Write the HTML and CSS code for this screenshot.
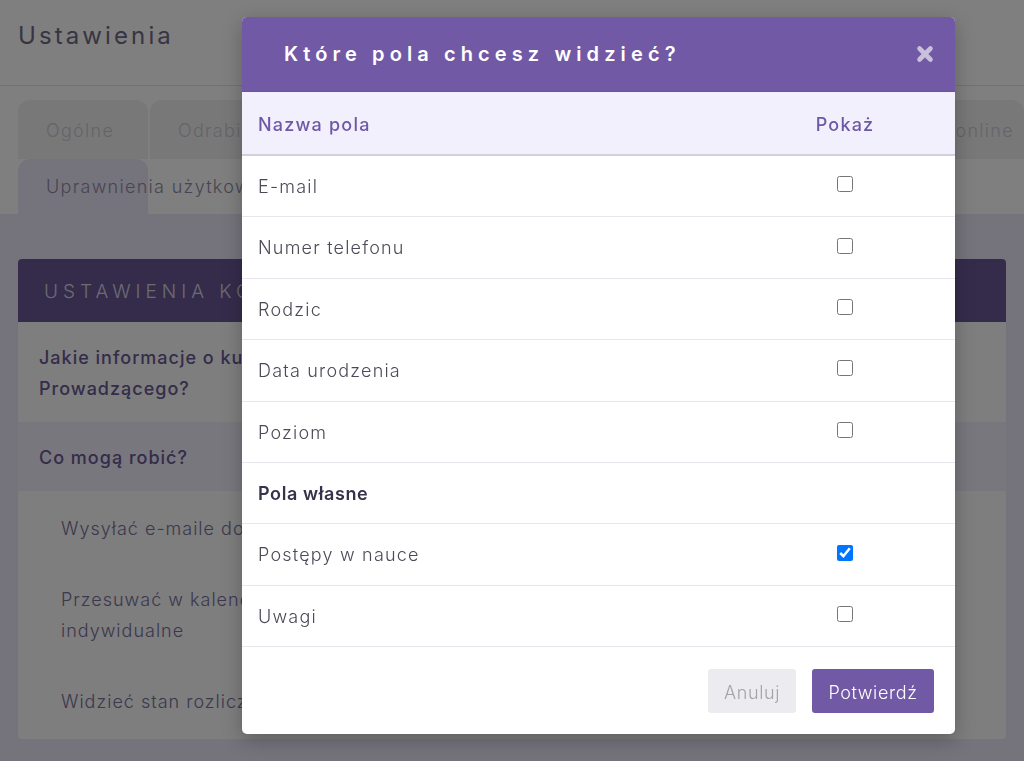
FILE: index.html
```html
<!DOCTYPE html>
<html lang="pl">
<head>
    <meta charset="UTF-8">
    <meta name="viewport" content="width=device-width, initial-scale=1.0">
    <title>Ustawienia</title>
    <link rel="stylesheet" href="styles.css">
</head>
<body>
<div class="page">
    <header class="top">
        <h1>Ustawienia</h1>
    </header>
    <nav class="tabs">
        <div class="tab-row">
            <a class="tab">Ogólne</a>
            <a class="tab">Odrabianie zajęć</a>
            <a class="tab tab-push">Zajęcia online</a>
        </div>
        <div class="tab-row">
            <a class="tab active">Uprawnienia użytkowników</a>
        </div>
    </nav>
    <main class="content">
        <section class="card">
            <h2 class="card-title">Ustawienia konta prowadzącego</h2>
            <div class="card-row question">Jakie informacje o kursantach może widzieć konto<br>Prowadzącego?</div>
            <div class="card-row question alt">Co mogą robić?</div>
            <div class="card-row option">Wysyłać e-maile do kursantów</div>
            <div class="card-row option">Przesuwać w kalendarzu zajęcia grupowe i<br>indywidualne</div>
            <div class="card-row option">Widzieć stan rozliczeń kursantów</div>
        </section>
    </main>
</div>

<div class="overlay"></div>

<div class="modal">
    <div class="modal-header">
        <h3>Które pola chcesz widzieć?</h3>
        <button class="close" type="button" aria-label="Zamknij">
            <svg width="18" height="18" viewBox="0 0 18 18">
                <path d="M3.5 3.5 L14.5 14.5 M14.5 3.5 L3.5 14.5" stroke="#c9c1dc" stroke-width="4.6" stroke-linecap="round"/>
            </svg>
        </button>
    </div>
    <table class="fields">
        <thead>
        <tr>
            <th>Nazwa pola</th>
            <th class="col-show">Pokaż</th>
        </tr>
        </thead>
        <tbody>
        <tr><td>E-mail</td><td class="col-show"><input type="checkbox"></td></tr>
        <tr><td>Numer telefonu</td><td class="col-show"><input type="checkbox"></td></tr>
        <tr><td>Rodzic</td><td class="col-show"><input type="checkbox"></td></tr>
        <tr><td>Data urodzenia</td><td class="col-show"><input type="checkbox"></td></tr>
        <tr><td>Poziom</td><td class="col-show"><input type="checkbox"></td></tr>
        <tr class="group"><td colspan="2">Pola własne</td></tr>
        <tr><td>Postępy w nauce</td><td class="col-show"><input type="checkbox" checked></td></tr>
        <tr><td>Uwagi</td><td class="col-show"><input type="checkbox"></td></tr>
        </tbody>
    </table>
    <div class="modal-footer">
        <button class="btn btn-light" type="button">Anuluj</button>
        <button class="btn btn-primary" type="button">Potwierdź</button>
    </div>
</div>
</body>
</html>
```

FILE: styles.css
```css
*, *:before, *:after {
    box-sizing: border-box;
}

body {
    font-family: Inter, 'Open Sans', Arial, sans-serif;
    margin: 0;
    padding: 0;
    background-color: #ffffff;
    color: #40356a;
    height: 761px;
    overflow: hidden;
}

.page {
    min-height: 761px;
    background-color: #eae8f8;
}

/* page header */
.top {
    background-color: #ffffff;
    height: 86px;
    padding: 21px 18px 0;
    border-bottom: 1px solid #e4e4ea;
}

.top h1 {
    margin: 0;
    font-size: 24px;
    font-weight: 400;
    letter-spacing: 3.1px;
    color: #6e6a86;
}

/* tabs */
.tabs {
    background-color: #ffffff;
    padding: 14px 0 0 18px;
}

.tab-row {
    display: flex;
    gap: 2px;
}

.tab {
    display: block;
    height: 59px;
    line-height: 61px;
    padding: 0 28px;
    background-color: #f1f1f2;
    border-radius: 12px 12px 0 0;
    color: #c9c9cf;
    font-size: 18px;
    font-weight: 300;
    letter-spacing: 1.3px;
    white-space: nowrap;
}

.tab:first-child {
    width: 130px;
}

.tab-push {
    margin-left: auto;
    padding-right: 10px;
}

.tab.active {
    height: 55px;
    line-height: 55px;
    background-color: #eae8f8;
    color: #8f8aa6;
}

/* content */
.content {
    padding: 45px 18px 0;
}

.card {
    background-color: #fcfcfc;
    border-radius: 4px;
    overflow: hidden;
    height: 480px;
}

.card-title {
    margin: 0;
    height: 63px;
    line-height: 65px;
    padding: 0 26px;
    background-color: #6a5996;
    color: #d8d6e2;
    font-size: 19px;
    font-weight: 300;
    letter-spacing: 5px;
    text-transform: uppercase;
}

.card-row {
    font-size: 18px;
    line-height: 31px;
    letter-spacing: 1px;
}

.question {
    padding: 20px 21px 18px;
    font-weight: 500;
    color: #6a5894;
}

.question.alt {
    background-color: #f1eefb;
}

.option {
    padding: 22px 43px 18px;
    font-weight: 300;
    color: #78709a;
}

/* modal */
.overlay {
    position: fixed;
    inset: 0;
    background-color: rgba(0, 0, 0, 0.5);
}

.modal {
    position: absolute;
    left: 242px;
    top: 17px;
    width: 713px;
    background-color: #ffffff;
    border-radius: 5px;
    overflow: hidden;
    box-shadow: 0 6px 20px rgba(0, 0, 0, 0.25);
}

.modal-header {
    display: flex;
    align-items: center;
    justify-content: space-between;
    height: 75px;
    padding: 0 21px 0 42px;
    background-color: #7159a6;
    border-bottom: 1px solid #6a54a0;
}

.modal-header h3 {
    margin: 0;
    color: #ffffff;
    font-size: 20px;
    font-weight: 600;
    letter-spacing: 5.1px;
}

.close {
    border: none;
    background: none;
    padding: 0;
    width: 18px;
    height: 18px;
    cursor: pointer;
}

.close svg {
    display: block;
}

.fields {
    width: 100%;
    border-collapse: collapse;
}

.fields th {
    text-align: left;
    height: 63px;
    padding: 3px 16px 0;
    background-color: #f3f0fd;
    border-bottom: 2px solid #d3cfdf;
    color: #6d58a6;
    font-size: 18px;
    font-weight: 500;
    letter-spacing: 1.2px;
}

.fields td {
    padding: 18px 16px 16px;
    line-height: 26.4px;
    border-bottom: 1px solid #e8e6ec;
    color: #4b4a57;
    font-size: 18px;
    font-weight: 300;
    letter-spacing: 1.2px;
}

.fields .col-show {
    width: 220px;
    text-align: center;
}

.fields td.col-show {
    padding: 0 0 4px;
}

.fields input[type="checkbox"] {
    display: block;
    width: 16px;
    height: 16px;
    margin: 0 auto;
}

.fields .group td {
    font-weight: 600;
    color: #35334a;
    letter-spacing: 0.6px;
}

.modal-footer {
    display: flex;
    justify-content: flex-end;
    gap: 16px;
    padding: 22px 21px 21px;
}

.btn {
    height: 44px;
    padding: 2px 10px 0;
    border: none;
    border-radius: 3px;
    font-family: inherit;
    font-size: 18px;
    font-weight: 300;
    letter-spacing: 0.6px;
    cursor: pointer;
}

.btn-light {
    width: 88px;
    background-color: #ececf0;
    color: #a3a2ad;
}

.btn-primary {
    width: 122px;
    background-color: #7159a6;
    color: #ffffff;
}
```
